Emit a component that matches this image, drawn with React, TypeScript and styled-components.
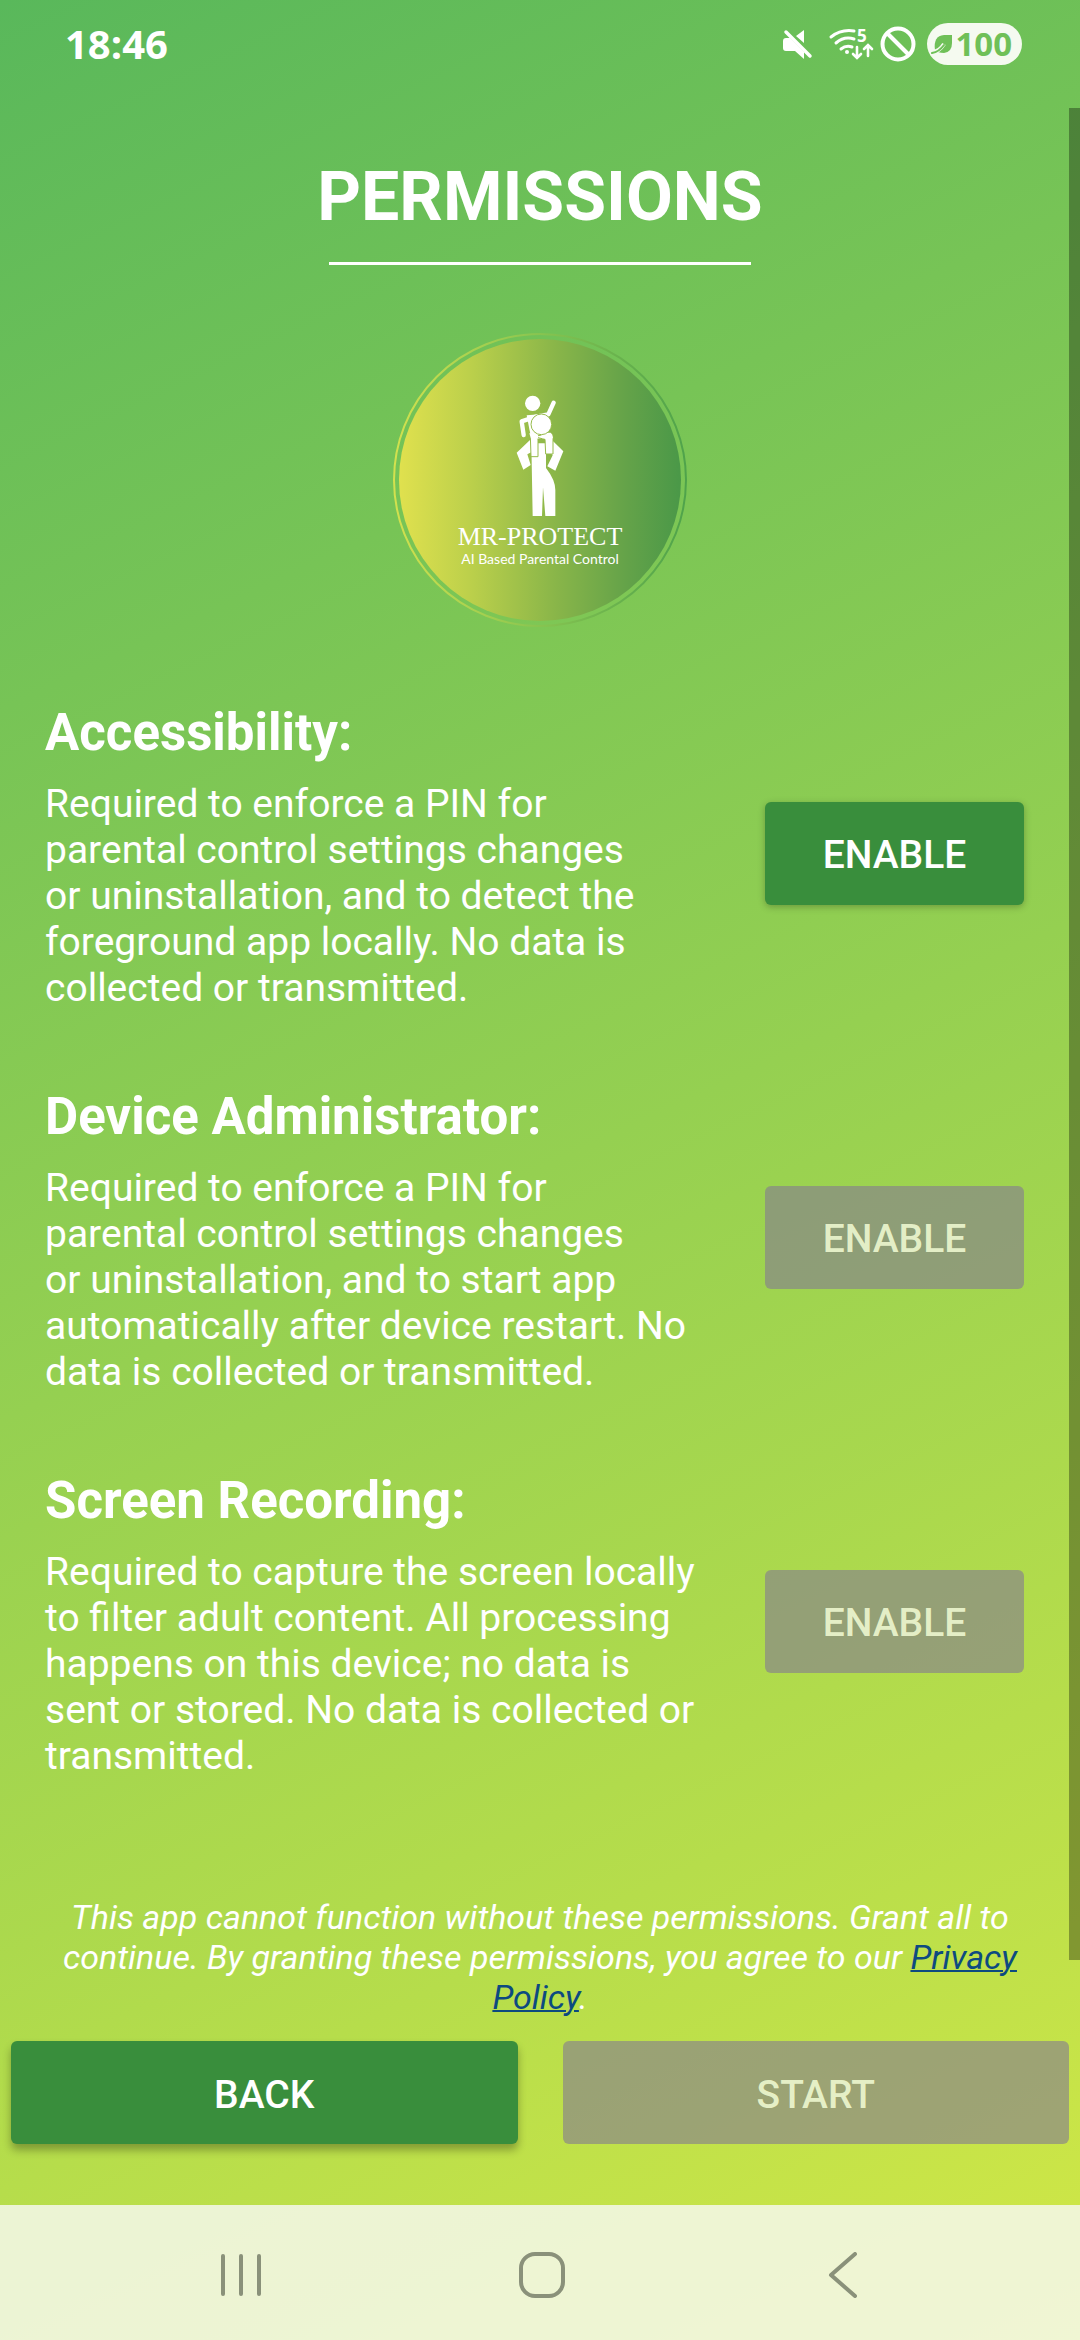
import styled, { createGlobalStyle } from "styled-components";

const GlobalStyle = createGlobalStyle`
  * {
    box-sizing: border-box;
  }

  body {
    margin: 0;
    font-family: Roboto, "Liberation Sans", sans-serif;
    color: #fff;
  }

  h1, h2, p {
    margin: 0;
  }
`;

const Screen = styled.div`
  position: relative;
  display: flex;
  flex-direction: column;
  min-height: 100vh;
  background: linear-gradient(155deg, #59b85b 0%, #95d051 50%, #d2e846 100%);
`;

const StatusBar = styled.header`
  display: flex;
  align-items: center;
  justify-content: space-between;
  height: 88px;
  padding: 0 58px 0 65px;
`;

const Clock = styled.time`
  font-family: "Open Sans", sans-serif;
  font-size: 40px;
  font-weight: 700;
  line-height: 48px;
`;

const StatusIcons = styled.div`
  display: flex;
  align-items: center;
  gap: 7px;
`;

const Battery = styled.span`
  display: flex;
  align-items: center;
  height: 42px;
  margin-left: 4px;
  padding: 0 10px 0 4px;
  border-radius: 21px;
  background: #f5faf0;
  color: #6fc058;
  font-family: "Open Sans", sans-serif;
  font-size: 33px;
  font-weight: 700;
  line-height: 40px;
`;

const Content = styled.main`
  display: flex;
  flex: 1;
  flex-direction: column;
  padding: 69px 45px 0;
`;

const Title = styled.h1`
  font-size: 68px;
  font-weight: 700;
  line-height: 80px;
  text-align: center;
`;

const Rule = styled.hr`
  width: 422px;
  height: 3px;
  margin: 25px auto 68px;
  border: none;
  background: #fff;
`;

const Emblem = styled.svg`
  align-self: center;
  width: 296px;
  height: 296px;
  margin-bottom: 74px;
`;

const Permissions = styled.div`
  display: flex;
  flex-direction: column;
  gap: 76px;
`;

const Permission = styled.section`
  display: flex;
  align-items: center;
  justify-content: space-between;
  padding-right: 11px;
`;

const PermissionName = styled.h2`
  margin-bottom: 18px;
  font-size: 51px;
  font-weight: 700;
  line-height: 60px;
`;

const Description = styled.p`
  font-size: 39px;
  line-height: 46px;
  white-space: pre-line;
`;

const Button = styled.button<{ $wide?: boolean }>`
  flex: ${({ $wide }) => ($wide ? "1" : "0 0 259px")};
  height: 103px;
  margin-bottom: ${({ $wide }) => ($wide ? 0 : 8)}px;
  padding: 4px 0 0;
  border: none;
  border-radius: 6px;
  background: #398e3c;
  box-shadow: ${({ $wide }) => ($wide ? "0 6px 9px rgba(0, 0, 0, 0.3)" : "0 2px 7px rgba(0, 0, 0, 0.25)")};
  color: #fff;
  font-family: inherit;
  font-size: 39px;
  font-weight: 500;

  &:disabled {
    background: rgba(132, 124, 144, 0.62);
    box-shadow: none;
    color: rgba(240, 250, 210, 0.9);
  }
`;

const Note = styled.p`
  margin-top: auto;
  padding: 0 15px;
  font-size: 34px;
  font-style: italic;
  line-height: 40px;
  text-align: center;
`;

const PolicyLink = styled.a`
  color: #0d4a80;
  text-decoration-thickness: 2px;
`;

const Actions = styled.div`
  display: flex;
  gap: 45px;
  padding: 24px 11px 61px;
`;

const ScrollThumb = styled.div`
  position: absolute;
  top: 108px;
  right: 0;
  width: 11px;
  height: 1852px;
  background: rgba(0, 0, 0, 0.33);
`;

const NavBar = styled.nav`
  display: flex;
  align-items: center;
  justify-content: space-around;
  height: 135px;
  padding: 4px 86px 0 90px;
  background: rgba(246, 248, 238, 0.84);
`;

const NavButton = styled.button`
  display: flex;
  align-items: center;
  justify-content: center;
  width: 120px;
  height: 100px;
  padding: 0;
  border: none;
  background: none;
  color: #8a917a;
`;

const permissions = [
  {
    name: "Accessibility",
    text: `Required to enforce a PIN for
      parental control settings changes
      or uninstallation, and to detect the
      foreground app locally. No data is
      collected or transmitted.`,
    enabled: true,
  },
  {
    name: "Device Administrator",
    text: `Required to enforce a PIN for
      parental control settings changes
      or uninstallation, and to start app
      automatically after device restart. No
      data is collected or transmitted.`,
    enabled: false,
  },
  {
    name: "Screen Recording",
    text: `Required to capture the screen locally
      to filter adult content. All processing
      happens on this device; no data is
      sent or stored. No data is collected or
      transmitted.`,
    enabled: false,
  },
];

const MuteIcon = () => (
  <svg width="39" height="30" viewBox="0 0 39 30" fill="#fff">
    <path d="M21 1v13L13 7zM3 9h4l14 14v7l-9-8H3q-3 0-3-3v-7q0-3 3-3z" />
    <path d="M3 3l24 24" stroke="#fff" strokeWidth="3.5" strokeLinecap="round" />
  </svg>
);

const WifiIcon = () => (
  <svg
    width="44"
    height="32"
    viewBox="0 0 44 32"
    overflow="visible"
    fill="none"
    stroke="#fff"
    strokeWidth="3"
    strokeLinecap="round"
  >
    <path d="M2 9Q12 1 25 3M7 15q8-7 18-4M12 21q5-4 11-2" />
    <circle cx="18" cy="24" r="2" fill="#fff" stroke="none" />
    <path d="M28 19v10M24 26l4 4 4-4M39 28V18M35 21l4-4 4 4" strokeWidth="2.6" />
    <text x="28" y="14" fill="#fff" stroke="none" fontFamily="Open Sans, sans-serif" fontSize="17" fontWeight="700">
      5
    </text>
  </svg>
);

const BanIcon = () => (
  <svg width="36" height="36" viewBox="0 0 36 36" fill="none" stroke="#fff" strokeWidth="4">
    <circle cx="18" cy="18" r="15.5" />
    <path d="M7 7l22 22" />
  </svg>
);

const LeafIcon = () => (
  <svg width="24" height="24" viewBox="0 0 24 24">
    <path d="M21 3v8q0 9-8 10-6 0-9-3-2-14 9-15z" fill="#6fc058" />
    <path d="M1 20q7 0 12-8" stroke="#f5faf0" strokeWidth="4" fill="none" />
    <path d="M1 21q7-1 12-8" stroke="#6fc058" strokeWidth="2" fill="none" strokeLinecap="round" />
  </svg>
);

const Logo = () => (
  <Emblem viewBox="0 0 296 296" role="img" aria-label="MR-PROTECT">
    <defs>
      <linearGradient id="disc">
        <stop offset="0" stopColor="#e0e14e" />
        <stop offset="0.25" stopColor="#bcd04b" />
        <stop offset="0.55" stopColor="#8ab649" />
        <stop offset="0.8" stopColor="#65a349" />
        <stop offset="1" stopColor="#4a9848" />
      </linearGradient>
      <linearGradient id="ring">
        <stop offset="0" stopColor="#d3e14e" />
        <stop offset="0.5" stopColor="#87c450" />
        <stop offset="1" stopColor="#4fa34b" />
      </linearGradient>
    </defs>
    <circle cx="148" cy="147" r="146" fill="none" stroke="url(#ring)" strokeWidth="2" />
    <circle cx="148" cy="147" r="141" fill="url(#disc)" />
    {/* child on the shoulders of the parent */}
    <svg x="118" y="57" width="60" height="130" viewBox="0 0 180 390" fill="#fff">
      <circle cx="68" cy="40" r="23" />
      <path
        d="M131 38L115 73 78 80 35 94 41 135"
        fill="none"
        stroke="#fff"
        strokeWidth="13"
        strokeLinecap="round"
        strokeLinejoin="round"
      />
      <path d="M50 76L100 72V145L64 148z" />
      <path d="M60 150L20 188 40 239 62 225 52 193 72 182zM128 152L160 184 136 242 112 229 128 196 112 178z" />
      <path d="M64 160H108V234Q136 270 136 300V378H106L99 292 96 378H68z" />
      <path d="M61 138H78L84 149V200H63zM80 138L120 130Q129 130 129 144V192H107L105 148 80 142z" stroke="#96bb4a" strokeWidth="3" />
      <path d="M58 130H84V146H63zM92 128H122Q129 134 129 145H96z" />
      <circle cx="94" cy="103" r="31" stroke="#96bb4a" strokeWidth="3" />
    </svg>
    <text x="148" y="212" fill="#fff" textAnchor="middle" fontFamily="Liberation Serif, serif" fontSize="26">
      MR-PROTECT
    </text>
    <text x="148" y="231" fill="#fff" textAnchor="middle" fontFamily="Lato, sans-serif" fontSize="14">
      AI Based Parental Control
    </text>
  </Emblem>
);

const App = () => {
  return (
    <Screen>
      <GlobalStyle />

      <StatusBar>
        <Clock>18:46</Clock>
        <StatusIcons>
          <MuteIcon />
          <WifiIcon />
          <BanIcon />
          <Battery>
            <LeafIcon />
            100
          </Battery>
        </StatusIcons>
      </StatusBar>

      <Content>
        <Title>PERMISSIONS</Title>
        <Rule />
        <Logo />

        <Permissions>
          {permissions.map(({ name, text, enabled }) => (
            <Permission key={name}>
              <div>
                <PermissionName>{name}:</PermissionName>
                <Description>{text}</Description>
              </div>
              <Button disabled={!enabled} aria-label={`ENABLE ${name}`}>
                ENABLE
              </Button>
            </Permission>
          ))}
        </Permissions>

        <Note>
          This app cannot function without these permissions. Grant all to continue. By granting these permissions, you
          agree to our <PolicyLink href="#privacy">Privacy Policy</PolicyLink>.
        </Note>
      </Content>

      <Actions>
        <Button $wide>BACK</Button>
        <Button $wide disabled>
          START
        </Button>
      </Actions>

      <NavBar>
        <NavButton aria-label="Recent apps">
          <svg width="42" height="44" viewBox="0 0 42 44" stroke="currentColor" strokeWidth="4" strokeLinecap="round">
            <path d="M3 3v38M21 3v38M39 3v38" />
          </svg>
        </NavButton>
        <NavButton aria-label="Home">
          <svg width="46" height="46" viewBox="0 0 46 46" fill="none" stroke="currentColor" strokeWidth="4">
            <rect x="2" y="2" width="42" height="42" rx="14" />
          </svg>
        </NavButton>
        <NavButton aria-label="Back">
          <svg width="30" height="46" viewBox="0 0 30 46" fill="none" stroke="currentColor" strokeWidth="4" strokeLinecap="round" strokeLinejoin="round">
            <path d="M27 2L3 23l24 21" />
          </svg>
        </NavButton>
      </NavBar>

      <ScrollThumb />
    </Screen>
  );
};

export default App;
